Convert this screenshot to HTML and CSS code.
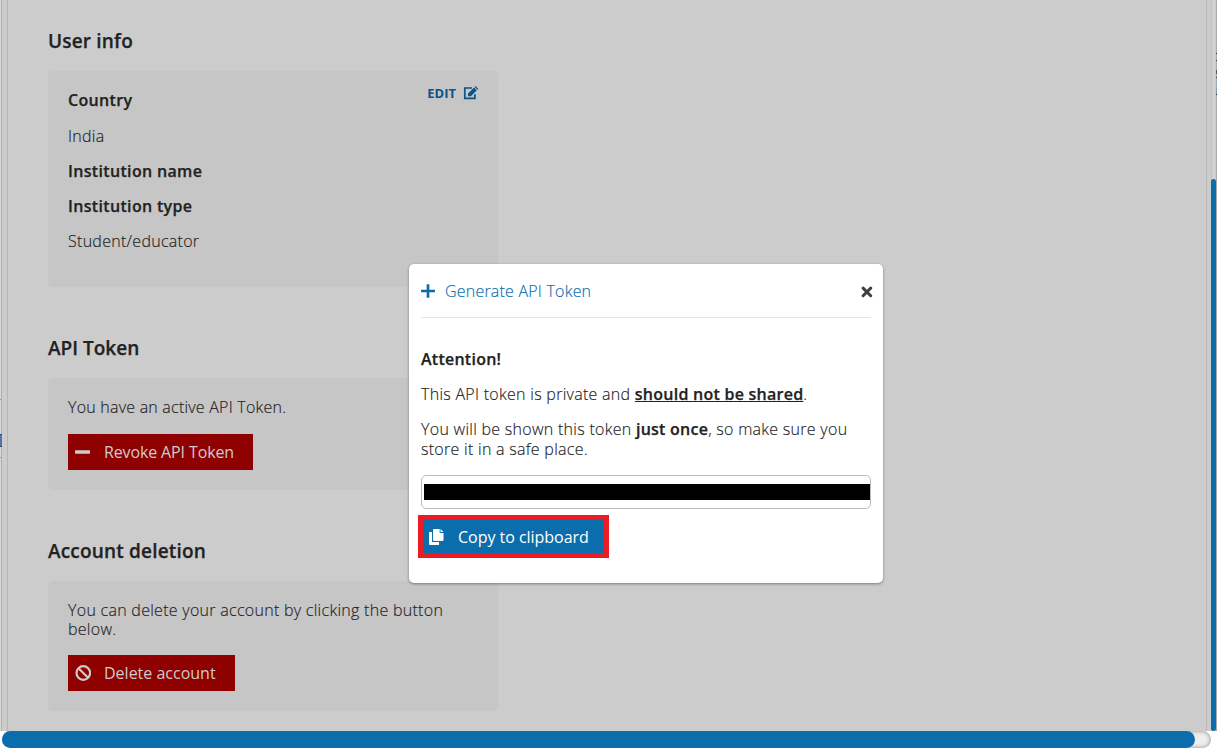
FILE: index.html
```html
<!DOCTYPE html>
<html lang="en">
<head>
<meta charset="utf-8">
<title>Profile</title>
<link rel="stylesheet" href="styles.css">
</head>
<body>
<div class="page">
  <div class="view">
    <div class="edge-left"><i class="tab"></i></div>
    <div class="gutter-left"></div>
    <main class="content">
      <section class="section">
        <h2>User info</h2>
        <div class="card info">
          <dl>
            <dt>Country</dt><dd>India</dd>
            <dt>Institution name</dt>
            <dt>Institution type</dt><dd>Student/educator</dd>
          </dl>
          <a class="edit"><span>EDIT</span>
            <svg width="16" height="14" viewBox="0 0 16 14"><path d="M9 2H1.8V12.4H11.9V8.2" fill="none" stroke="currentColor" stroke-width="1.7"/><path d="M5 7.5 11 1.5 13.8 4.3 7.8 10.3H5ZM11.7 .9 12.5.1 15.3 2.9 14.5 3.7Z" fill="currentColor"/></svg>
          </a>
        </div>
      </section>
      <section class="section">
        <h2 class="tight">API Token</h2>
        <div class="card token">
          <p>You have an active API Token.</p>
          <a class="btn revoke">
            <svg width="16" height="16" viewBox="0 0 16 16"><rect x="0" y="6.3" width="15" height="3.4" rx=".8" fill="currentColor"/></svg>
            <span class="revoke-label">Revoke API Token</span>
          </a>
        </div>
      </section>
      <section class="section">
        <h2>Account deletion</h2>
        <div class="card deletion">
          <p>You can delete your account by clicking the button below.</p>
          <a class="btn delete">
            <svg width="16" height="16" viewBox="0 0 16 16" fill="none" stroke="currentColor" stroke-width="2.2"><circle cx="8.3" cy="8" r="6.8"/><path d="M3.5 3.2 13.1 12.8"/></svg>
            <span>Delete account</span>
          </a>
        </div>
      </section>
    </main>
    <div class="gutter-right"></div>
    <div class="vtrack"><div class="vthumb"></div></div>
    <div class="edge-right"></div>
  </div>
  <div class="hbar"><div class="htrack"><div class="hthumb"></div></div></div>
</div>
<div class="modal">
  <header class="modal-head">
    <svg width="14" height="14" viewBox="0 0 14 14"><path d="M7 .2V13.8M0 7H14" stroke="#0c6dad" stroke-width="2.7" fill="none"/></svg>
    <span class="title">Generate API Token</span>
    <svg class="close" width="12" height="12" viewBox="0 0 12 12"><path d="M2.1 2.1 9.7 9.7M9.7 2.1 2.1 9.7" stroke="#404040" stroke-width="3" stroke-linecap="round" fill="none"/></svg>
  </header>
  <div class="modal-body">
    <p><b>Attention!</b></p>
    <p>This API token is private and <b class="underline">should not be shared</b>.</p>
    <p>You will be shown this token <b>just once</b>, so make sure you store it in a safe place.</p>
    <div class="field"><div class="redacted"></div></div>
    <a class="copy">
      <svg width="15" height="16" viewBox="0 0 15 16" fill="#fff"><path d="M0 3H3V13H10V16H1A1 1 0 0 1 0 15Z"/><path d="M5 0H10.7V4H14.5V11A1 1 0 0 1 13.5 12H5A1 1 0 0 1 4 11V1A1 1 0 0 1 5 0Z"/><path d="M11.5 0 14.5 3.1H11.5Z"/></svg>
      <span>Copy to clipboard</span>
    </a>
  </div>
</div>
</body>
</html>
```
FILE: styles.css
```css
* { box-sizing: border-box; }
body { margin: 0; width: 1217px; height: 748px; overflow: hidden; background: #fff; color: #222; font: 300 16px/20px "Open Sans", sans-serif; letter-spacing: .28px; -webkit-text-stroke: .15px currentColor; }
h2, p, dl, dt, dd { margin: 0; }
svg { flex: none; display: block; }
b { font-weight: 600; letter-spacing: .25px; }
b, dt, h2 { -webkit-text-stroke: .25px currentColor; }
.page { display: flex; flex-direction: column; height: 748px; }
.view { display: flex; height: 731px; background: #ccc; }
.edge-left { width: 2px; border-right: 1px solid #b0b0b0; background: linear-gradient(#d7d7d7 0 399px, #999 399px 400px, #d7d7d7 400px 457px, #999 457px 458px, #d7d7d7 458px); padding-top: 434px; }
.tab { display: block; width: 2px; height: 13px; background: #5077a8; border-top: 1px solid #344866; border-bottom: 1px solid #344866; }
.gutter-left { width: 6px; border-right: 1px solid #b6b6b6; }
.content { width: 1198px; padding: 27px 40px 0; }
.gutter-right { width: 5px; border-left: 1px solid #b8b8b8; }
.section { width: 450px; margin-bottom: 47px; }
h2 { height: 28px; margin-bottom: 16px; font-size: 19px; line-height: 28px; font-weight: 600; letter-spacing: .18px; }
.tight { letter-spacing: 0; }
.card { background: #c6c6c6; border-radius: 5px; padding: 20px; }
.info { height: 216px; display: flex; justify-content: space-between; padding-top: 19px; }
.token { height: 112px; }
.deletion { height: 130px; }
dt, dd { margin-bottom: 15px; }
dt { font-weight: 600; letter-spacing: .33px; }
dt:first-child { margin-bottom: 16px; }
.edit { display: flex; gap: 7px; height: 28px; margin: -11px -1px 0 0; align-items: center; color: #0a5488; font-size: 13px; font-weight: 700; letter-spacing: 0; -webkit-text-stroke: 0; }
.token p, .deletion p { line-height: 19px; }
.token p { letter-spacing: .22px; }
.btn { display: flex; align-items: center; height: 36px; padding-left: 7px; gap: 13px; background: #8f0000; color: #ccc; font-weight: 400; letter-spacing: 0; -webkit-text-stroke: 0; }
.revoke { width: 185px; margin-top: 17px; }
.revoke-label { letter-spacing: -.13px; }
.delete { width: 167px; margin-top: 16px; }
.vtrack { width: 5px; background: linear-gradient(90deg, #bdbdbd, #d5d5d5 40%, #ccc); padding-top: 179px; }
.vthumb { height: 552px; background: #0c6dad; border-radius: 3px; }
.edge-right { width: 1px; background: linear-gradient(#aaa 0 53px, #333 53px 54px, #aaa 54px 60px, #333 60px 61px, #aaa 61px 70px, #555 70px 74px, #aaa 74px 77px, #333 77px 78px, #aaa 78px 87px, #7d9fba 87px 94px, #333 94px 95px, #aaa 95px); }
.hbar { height: 17px; padding-left: 2px; }
.htrack { width: 1209px; height: 17px; border-radius: 9px; background: #eee; box-shadow: inset 0 0 4px #888; }
.hthumb { width: 1193px; height: 17px; border-radius: 9px; background: #0c6dad; }
.modal { position: absolute; left: 409px; top: 264px; width: 474px; height: 319px; padding: 0 12px; background: #fff; border-radius: 5px; box-shadow: 0 1px 3px rgba(0,0,0,.4); }
.modal-head { display: flex; align-items: center; height: 54px; border-bottom: 1px solid #e5e5e5; }
.title { margin-left: 10px; color: #0c6dad; letter-spacing: .21px; }
.close { margin: 3px -2px 0 auto; }
.modal-body { padding-top: 31px; }
.modal-body p { margin-bottom: 15px; }
.underline { text-decoration: underline; }
.field { height: 34px; width: 450px; margin-top: 16px; border: 1px solid #bbb; border-radius: 5px; padding: 8px 0 0 2px; }
.redacted { height: 16px; background: #000; }
.copy { display: flex; align-items: center; width: 191px; height: 43px; margin: 6px 0 0 -3px; padding-left: 6px; gap: 14px; border: 5px solid #ed1c24; background: #0c6dad; color: #fff; font-weight: 400; letter-spacing: -.03px; -webkit-text-stroke: 0; }
```
